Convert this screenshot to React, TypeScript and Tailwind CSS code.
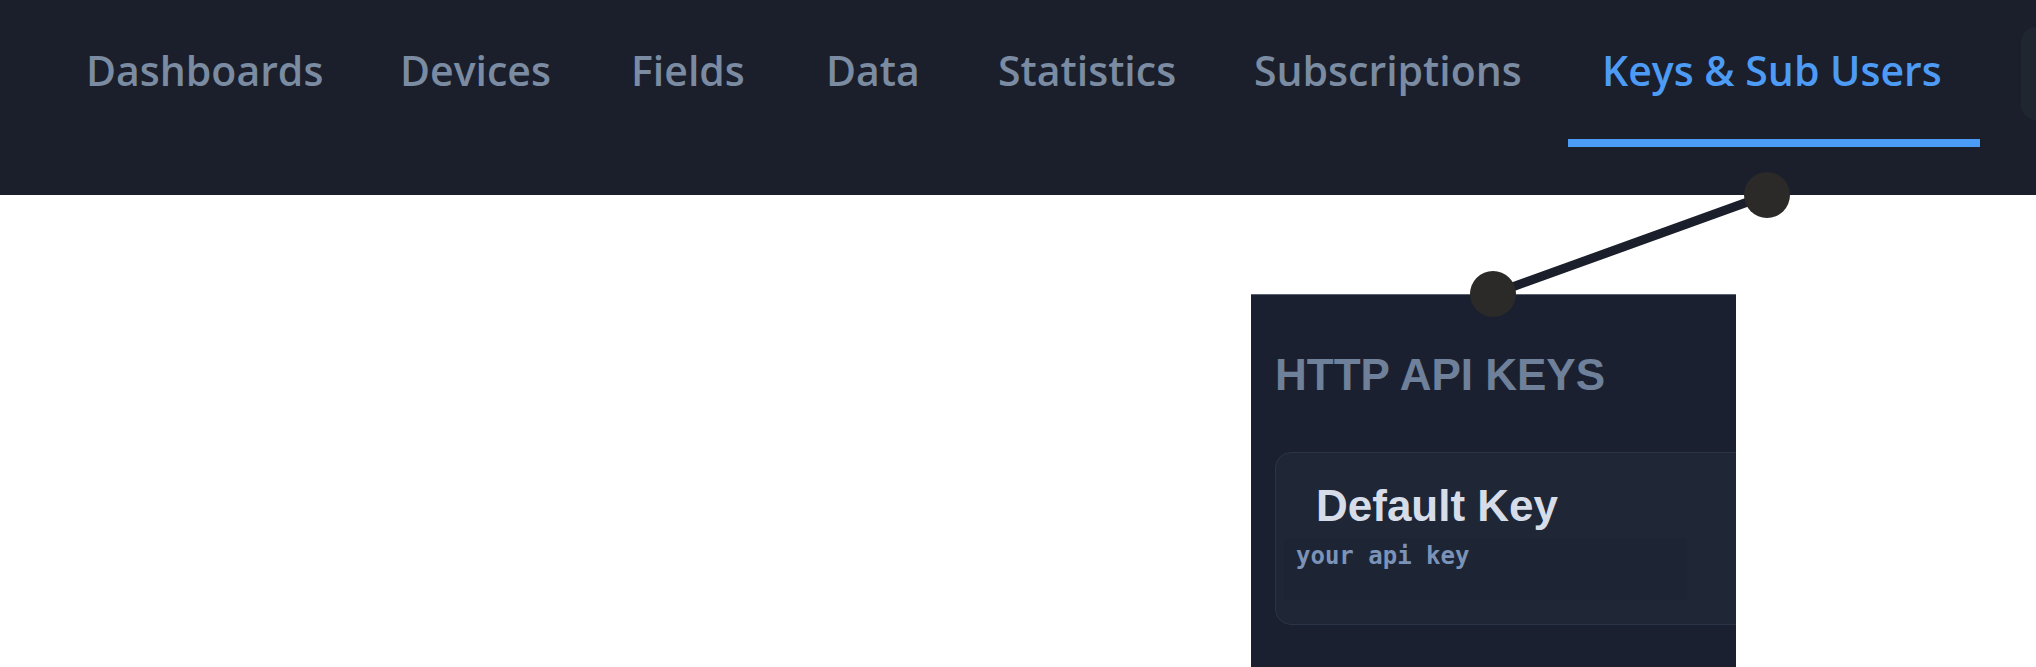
import React from 'react';

// tab widths pinned so the labels land where the reference has them
const tabs = [
    { label: 'Dashboards', w: 'w-[314px]' },
    { label: 'Devices', w: 'w-[231px]' },
    { label: 'Fields', w: 'w-[195px]' },
    { label: 'Data', w: 'w-[172px]' },
    { label: 'Statistics', w: 'w-[256px]' },
    { label: 'Subscriptions', w: 'w-[348px]' },
    { label: 'Keys & Sub Users', w: 'w-[412px]' },
];
const activeTab = 'Keys & Sub Users';

function NavTab({ label, width, active }: { label: string; width: string; active: boolean }) {
    return (
        <div
            className={`${width} shrink-0 pt-[49px] pb-[48px] pl-[34px] border-b-8 text-[41px] leading-[42px] font-semibold whitespace-nowrap ${
                active ? 'border-[#4a9cf7] text-[#4d9bf5]' : 'border-transparent text-[#7a8ba2]'
            }`}
        >
            {label}
        </div>
    );
}

// connector drawn over the page: dot on the nav edge, dot on the panel edge
function Connector() {
    return (
        <svg className="absolute left-0 top-0 pointer-events-none" width="2036" height="667">
            <line x1="1493" y1="294" x2="1767" y2="195" stroke="#1a1f2b" strokeWidth="9" />
            <circle cx="1767" cy="195" r="23" fill="#2b2a28" />
            <circle cx="1493" cy="294" r="23" fill="#2b2a28" />
        </svg>
    );
}

export default function App() {
    return (
        <div className="relative w-[2036px] h-[667px] bg-white overflow-hidden" style={{ fontFamily: '"Open Sans", sans-serif' }}>
            <nav className="h-[195px] bg-[#1a1f2b] flex items-start pl-[52px]">
                {tabs.map((t) => (
                    <NavTab key={t.label} label={t.label} width={t.w} active={t.label === activeTab} />
                ))}
                <div className="ml-auto mt-[27px] h-[93px] w-[15px] rounded-l-2xl bg-[#20262f]"></div>
            </nav>

            <div className="pl-[1251px] pt-[99px]">
                <div className="w-[485px] h-[373px] bg-[#1b2030] border-t border-[#5b6272] overflow-hidden pl-6 pt-[58px]" style={{ fontFamily: '"Liberation Sans", Arial, sans-serif' }}>
                    <h2 className="text-[44px] leading-[44px] font-bold text-[#6e809a] whitespace-nowrap">HTTP API KEYS</h2>

                    <div className="mt-[55px] w-[560px] rounded-2xl border border-[#2a3446] bg-[#1f2737] px-2 pt-[31px] pb-6">
                        <h3 className="ml-8 text-[44px] leading-[44px] font-bold text-[#d6dde9] whitespace-nowrap">Default Key</h3>
                        <div className="mt-[10px] w-[403px] h-[62px] bg-[#1d2535] px-3 pt-1">
                            <code className="text-[24px] leading-[28px] font-semibold text-[#7b93b8]" style={{ fontFamily: '"DejaVu Sans Mono", monospace' }}>
                                your api key
                            </code>
                        </div>
                    </div>
                </div>
            </div>

            <Connector />
        </div>
    );
}
